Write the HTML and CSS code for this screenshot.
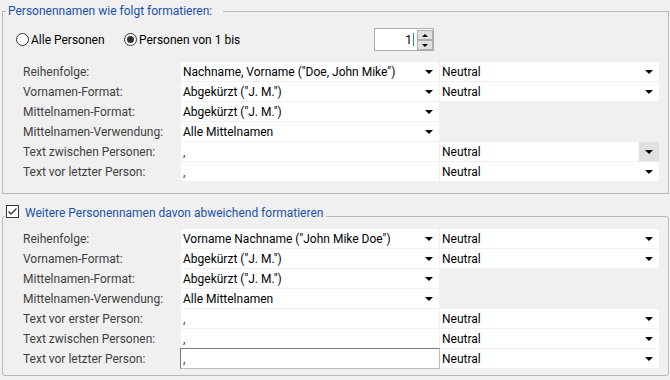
FILE: index.html
```html
<!DOCTYPE html>
<html lang="de">
<head>
    <meta charset="UTF-8">
    <title>Personennamen formatieren</title>
    <link rel="stylesheet" href="styles.css">
</head>
<body>
    <fieldset class="group">
        <legend class="group-title">Personennamen wie folgt formatieren:</legend>

        <div class="range-row">
            <label class="option option-all"><span class="radio"></span>Alle Personen</label>
            <label class="option option-some"><span class="radio checked"></span>Personen von 1 bis</label>
            <div class="spinbox">
                <span class="spin-value">1<span class="caret"></span></span>
                <span class="spin-buttons">
                    <span class="spin-btn"><i class="tri up"></i></span>
                    <span class="spin-btn"><i class="tri down"></i></span>
                </span>
            </div>
        </div>

        <div class="field-grid">
            <span class="field-label">Reihenfolge:</span>
            <div class="combo"><span class="combo-text">Nachname, Vorname ("Doe, John Mike")</span><i class="arrow"></i></div>
            <div class="combo"><span class="combo-text">Neutral</span><i class="arrow"></i></div>

            <span class="field-label">Vornamen-Format:</span>
            <div class="combo"><span class="combo-text">Abgekürzt ("J. M.")</span><i class="arrow"></i></div>
            <div class="combo"><span class="combo-text">Neutral</span><i class="arrow"></i></div>

            <span class="field-label">Mittelnamen-Format:</span>
            <div class="combo"><span class="combo-text">Abgekürzt ("J. M.")</span><i class="arrow"></i></div>
            <span></span>

            <span class="field-label">Mittelnamen-Verwendung:</span>
            <div class="combo"><span class="combo-text">Alle Mittelnamen</span><i class="arrow"></i></div>
            <span></span>

            <span class="field-label">Text zwischen Personen:</span>
            <div class="text-input">,</div>
            <div class="combo"><span class="combo-text">Neutral</span><i class="arrow hover"></i></div>

            <span class="field-label">Text vor letzter Person:</span>
            <div class="text-input">,</div>
            <div class="combo"><span class="combo-text">Neutral</span><i class="arrow"></i></div>
        </div>
    </fieldset>

    <fieldset class="group group-alt">
        <legend class="group-title check-title">
            <span class="checkbox">
                <svg width="11" height="11" viewBox="0 0 11 11"><polyline points="1.5,5.5 4,8 9.5,2.5" fill="none" stroke="#333" stroke-width="1.3"/></svg>
            </span>
            <span>Weitere Personennamen davon abweichend formatieren</span>
        </legend>

        <div class="field-grid">
            <span class="field-label">Reihenfolge:</span>
            <div class="combo"><span class="combo-text">Vorname Nachname ("John Mike Doe")</span><i class="arrow"></i></div>
            <div class="combo"><span class="combo-text">Neutral</span><i class="arrow"></i></div>

            <span class="field-label">Vornamen-Format:</span>
            <div class="combo"><span class="combo-text">Abgekürzt ("J. M.")</span><i class="arrow"></i></div>
            <div class="combo"><span class="combo-text">Neutral</span><i class="arrow"></i></div>

            <span class="field-label">Mittelnamen-Format:</span>
            <div class="combo"><span class="combo-text">Abgekürzt ("J. M.")</span><i class="arrow"></i></div>
            <span></span>

            <span class="field-label">Mittelnamen-Verwendung:</span>
            <div class="combo"><span class="combo-text">Alle Mittelnamen</span><i class="arrow"></i></div>
            <span></span>

            <span class="field-label">Text vor erster Person:</span>
            <div class="text-input">,</div>
            <div class="combo"><span class="combo-text">Neutral</span><i class="arrow"></i></div>

            <span class="field-label">Text zwischen Personen:</span>
            <div class="text-input">,</div>
            <div class="combo"><span class="combo-text">Neutral</span><i class="arrow"></i></div>

            <span class="field-label">Text vor letzter Person:</span>
            <div class="text-input focused">,</div>
            <div class="combo"><span class="combo-text">Neutral</span><i class="arrow"></i></div>
        </div>
    </fieldset>
</body>
</html>
```

FILE: styles.css
```css
body {
    margin: 0;
    width: 670px;
    height: 380px;
    overflow: hidden;
    background-color: #f0f0f0;
    font-family: Roboto, "Noto Sans", sans-serif;
    font-size: 12px;
    color: #000;
}

.group {
    margin: 3px 1px 0 2px;
    padding: 0 0 12px;
    min-width: 0;
    border: 1px solid #b9b9b9;
}

.group-title {
    margin-left: 3px;
    padding: 0 11px 0 2px;
    line-height: 16px;
    color: #2150a8;
}

.group-alt {
    margin-top: 10px;
    padding-bottom: 7px;
    border-radius: 3px;
}

.check-title {
    display: flex;
    align-items: flex-start;
    margin-left: 2px;
    padding: 1px 3px 7px 1px;
}

.checkbox {
    display: flex;
    align-items: center;
    justify-content: center;
    box-sizing: border-box;
    width: 13px;
    height: 13px;
    margin-right: 6px;
    border: 1px solid #333;
    background-color: #fff;
}

/* radio buttons + spin box */
.range-row {
    display: flex;
    align-items: center;
    height: 23px;
    margin-top: 9px;
    padding-left: 13px;
}

.option {
    display: flex;
    align-items: center;
    color: #000;
}

.option-all {
    width: 108px;
}

.option-some {
    width: 250px;
}

.radio {
    display: flex;
    align-items: center;
    justify-content: center;
    box-sizing: border-box;
    width: 13px;
    height: 13px;
    margin-right: 2px;
    border: 1px solid #333;
    border-radius: 50%;
    background-color: #fff;
}

.radio.checked::after {
    content: "";
    width: 7px;
    height: 7px;
    border-radius: 50%;
    background-color: #333;
}

.spinbox {
    display: flex;
    box-sizing: border-box;
    width: 60px;
    height: 23px;
    border: 1px solid #adadad;
    background-color: #fff;
}

.spin-value {
    flex: 1;
    display: flex;
    align-items: center;
    justify-content: flex-end;
    padding-right: 3px;
}

.caret {
    width: 1px;
    height: 13px;
    margin-left: 1px;
    background-color: #2a7bd8;
}

.spin-buttons {
    display: flex;
    flex-direction: column;
    padding: 1px 0 0;
}

.spin-btn {
    display: flex;
    align-items: center;
    justify-content: center;
    box-sizing: border-box;
    width: 16px;
    height: 10px;
    border: 1px solid #adadad;
    background-color: #e1e1e1;
}

.tri {
    width: 0;
    height: 0;
    border-left: 3px solid transparent;
    border-right: 3px solid transparent;
}

.tri.up {
    border-bottom: 3px solid #000;
}

.tri.down {
    border-top: 3px solid #000;
}

/* label / combo grid */
.field-grid {
    display: grid;
    grid-template-columns: 157px 258px 219px;
    grid-auto-rows: 19px;
    gap: 1px;
    margin-top: 11px;
    padding-left: 20px;
}

.group-alt .field-grid {
    margin-top: 1px;
}

.field-label {
    display: flex;
    align-items: center;
    color: #404040;
    white-space: nowrap;
}

.combo {
    display: flex;
    align-items: center;
    background-color: #fff;
}

.combo-text {
    flex: 1;
    padding-left: 2px;
    white-space: nowrap;
    overflow: hidden;
}

.arrow {
    display: flex;
    align-items: center;
    justify-content: center;
    align-self: stretch;
    width: 20px;
}

.arrow::before {
    content: "";
    margin-top: 1px;
    border-left: 4px solid transparent;
    border-right: 4px solid transparent;
    border-top: 4px solid #000;
}

.arrow.hover {
    background-color: #e0e0e0;
}

.text-input {
    display: flex;
    align-items: center;
    padding-left: 2px;
    background-color: #fff;
    color: #16307a;
}

.text-input.focused {
    margin: -1px;
    padding-left: 2px;
    border: 1px solid;
    border-color: #7a7a7a #bdbdbd #bdbdbd #7a7a7a;
}
```
